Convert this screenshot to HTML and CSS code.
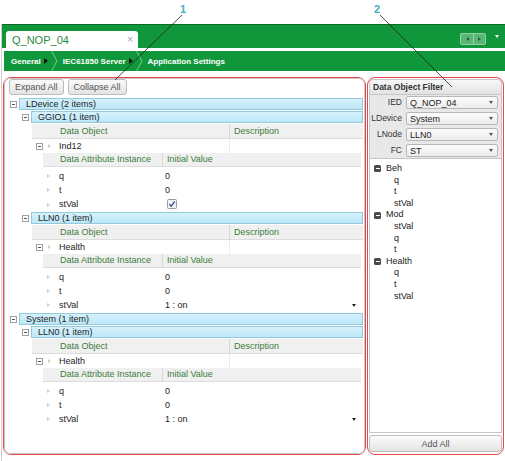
FILE: index.html
```html
<!DOCTYPE html>
<html lang="en">
<head>
    <meta charset="UTF-8">
    <title>Application Settings</title>
    <link rel="stylesheet" href="styles.css">
</head>
<body>
    <div class="app">
        <!-- Tab bar -->
        <div class="tabbar">
            <div class="tab">
                <span class="tab-title">Q_NOP_04</span>
                <span class="tab-close">×</span>
            </div>
            <div class="tab-nav">
                <span class="nav-btn"><i class="tri-left"></i></span>
                <span class="nav-btn"><i class="tri-right"></i></span>
            </div>
            <i class="tab-menu"></i>
        </div>

        <!-- Breadcrumbs -->
        <div class="crumbs">
            <span class="crumb">General</span><i class="crumb-arrow"></i>
            <svg class="crumb-sep" width="7" height="20" viewBox="0 0 7 20"><polyline points="0.5,0 6,10 0.5,20" /></svg>
            <span class="crumb">IEC61850 Server</span><i class="crumb-arrow"></i>
            <svg class="crumb-sep" width="7" height="20" viewBox="0 0 7 20"><polyline points="0.5,0 6,10 0.5,20" /></svg>
            <span class="crumb">Application Settings</span>
        </div>

        <div class="main">
            <!-- Left: data tree -->
            <div class="mark mark-left">
                <div class="panel tree-panel">
                    <div class="toolbar">
                        <button class="btn">Expand All</button>
                        <button class="btn">Collapse All</button>
                    </div>

                    <div class="tree">
                        <div class="node">
                            <div class="node-row"><span class="toggle"><i class="minus"></i></span><div class="bar">LDevice (2 items)</div></div>
                            <div class="children">
                                <div class="node">
                                    <div class="node-row"><span class="toggle"><i class="minus"></i></span><div class="bar">GGIO1 (1 item)</div></div>
                                    <div class="children leaf">
                                        <div class="do-head"><span></span><span>Data Object</span><span class="col-sep">Description</span></div>
                                        <div class="do-row"><span class="do-exp"><i class="minus"></i><i class="arrow"></i></span><span>Ind12</span><span class="col-sep"></span></div>
                                        <div class="dai">
                                            <div class="dai-head"><span></span><span>Data Attribute Instance</span><span class="col-sep">Initial Value</span></div>
                                            <div class="dai-rows">
                                                <div class="attr"><span><i class="arrow"></i></span><span>q</span><span>0</span></div>
                                                <div class="attr"><span><i class="arrow"></i></span><span>t</span><span>0</span></div>
                                                <div class="attr"><span><i class="arrow"></i></span><span>stVal</span><span><svg class="check" width="10" height="10" viewBox="0 0 10 10"><rect x="0.5" y="0.5" width="9" height="9" rx="1" /><polyline points="2.4,5.2 4.2,7.2 7.8,2.4" /></svg></span></div>
                                            </div>
                                        </div>
                                    </div>
                                </div>
                                <div class="node">
                                    <div class="node-row"><span class="toggle"><i class="minus"></i></span><div class="bar">LLN0 (1 item)</div></div>
                                    <div class="children leaf">
                                        <div class="do-head"><span></span><span>Data Object</span><span class="col-sep">Description</span></div>
                                        <div class="do-row"><span class="do-exp"><i class="minus"></i><i class="arrow"></i></span><span>Health</span><span class="col-sep"></span></div>
                                        <div class="dai">
                                            <div class="dai-head"><span></span><span>Data Attribute Instance</span><span class="col-sep">Initial Value</span></div>
                                            <div class="dai-rows">
                                                <div class="attr"><span><i class="arrow"></i></span><span>q</span><span>0</span></div>
                                                <div class="attr"><span><i class="arrow"></i></span><span>t</span><span>0</span></div>
                                                <div class="attr"><span><i class="arrow"></i></span><span>stVal</span><span class="combo">1 : on<i class="drop"></i></span></div>
                                            </div>
                                        </div>
                                    </div>
                                </div>
                            </div>
                        </div>

                        <div class="node">
                            <div class="node-row"><span class="toggle"><i class="minus"></i></span><div class="bar">System (1 item)</div></div>
                            <div class="children">
                                <div class="node">
                                    <div class="node-row"><span class="toggle"><i class="minus"></i></span><div class="bar">LLN0 (1 item)</div></div>
                                    <div class="children leaf">
                                        <div class="do-head"><span></span><span>Data Object</span><span class="col-sep">Description</span></div>
                                        <div class="do-row"><span class="do-exp"><i class="minus"></i><i class="arrow"></i></span><span>Health</span><span class="col-sep"></span></div>
                                        <div class="dai">
                                            <div class="dai-head"><span></span><span>Data Attribute Instance</span><span class="col-sep">Initial Value</span></div>
                                            <div class="dai-rows">
                                                <div class="attr"><span><i class="arrow"></i></span><span>q</span><span>0</span></div>
                                                <div class="attr"><span><i class="arrow"></i></span><span>t</span><span>0</span></div>
                                                <div class="attr"><span><i class="arrow"></i></span><span>stVal</span><span class="combo">1 : on<i class="drop"></i></span></div>
                                            </div>
                                        </div>
                                    </div>
                                </div>
                            </div>
                        </div>
                    </div>
                </div>
            </div>

            <!-- Right: filter -->
            <div class="mark mark-right">
                <div class="panel filter-panel">
                    <div class="filter-head">Data Object Filter</div>
                    <div class="filter-form">
                        <label>IED</label><div class="select">Q_NOP_04<i class="drop"></i></div>
                        <label>LDevice</label><div class="select">System<i class="drop"></i></div>
                        <label>LNode</label><div class="select">LLN0<i class="drop"></i></div>
                        <label>FC</label><div class="select">ST<i class="drop"></i></div>
                    </div>
                    <div class="filter-tree">
                        <div class="ft-parent"><i class="box-minus"></i>Beh</div>
                        <div class="ft-child">q</div>
                        <div class="ft-child">t</div>
                        <div class="ft-child">stVal</div>
                        <div class="ft-parent"><i class="box-minus"></i>Mod</div>
                        <div class="ft-child">stVal</div>
                        <div class="ft-child">q</div>
                        <div class="ft-child">t</div>
                        <div class="ft-parent"><i class="box-minus"></i>Health</div>
                        <div class="ft-child">q</div>
                        <div class="ft-child">t</div>
                        <div class="ft-child">stVal</div>
                    </div>
                    <button class="btn add-btn">Add All</button>
                </div>
            </div>
        </div>
    </div>

    <!-- Callout labels -->
    <svg class="callouts" width="505" height="461" viewBox="0 0 505 461">
        <text x="180" y="13">1</text>
        <line x1="182" y1="15" x2="115" y2="80" />
        <text x="374" y="13">2</text>
        <line x1="380" y1="15" x2="452" y2="87" />
    </svg>
</body>
</html>
```

FILE: styles.css
```css
* {
    margin: 0;
    padding: 0;
    box-sizing: border-box;
}

body {
    width: 505px;
    height: 461px;
    overflow: hidden;
    position: relative;
    background: #fff;
    font-family: "Liberation Sans", Arial, sans-serif;
    font-size: 9px;
    color: #222;
}

i {
    display: block;
    font-style: normal;
}

.app {
    margin: 24px 0 0 1px;
    height: 437px;
    border-left: 1px solid #d0d0d0;
}

/* Tab bar */
.tabbar {
    display: flex;
    align-items: flex-end;
    height: 24px;
    padding-left: 4px;
    background: #10973b;
    border-top: 1px solid #0a6b29;
}

.tab {
    display: flex;
    align-items: center;
    justify-content: space-between;
    width: 132px;
    height: 17px;
    padding: 0 5px 0 6px;
    background: #fff;
    border-radius: 3px 3px 0 0;
}

.tab-title {
    font-size: 11px;
    color: #2b8c3e;
}

.tab-close {
    font-size: 10px;
    color: #a0a0a0;
}

.tab-nav {
    display: flex;
    align-self: flex-start;
    margin: 8px 0 0 auto;
    height: 12px;
    border: 1px solid rgba(255, 255, 255, 0.35);
    border-radius: 2px;
    background: rgba(255, 255, 255, 0.3);
}

.nav-btn {
    display: flex;
    align-items: center;
    justify-content: center;
    width: 12px;
    height: 10px;
}

.nav-btn + .nav-btn {
    border-left: 1px solid rgba(255, 255, 255, 0.35);
}

.tri-left {
    border-right: 3px solid #2f5f3a;
    border-top: 2.5px solid transparent;
    border-bottom: 2.5px solid transparent;
}

.tri-right {
    border-left: 3px solid #2f5f3a;
    border-top: 2.5px solid transparent;
    border-bottom: 2.5px solid transparent;
}

.tab-menu {
    align-self: flex-start;
    margin: 10px 6px 0 9px;
    border-top: 3px solid #fff;
    border-left: 2.5px solid transparent;
    border-right: 2.5px solid transparent;
}

/* Breadcrumbs */
.crumbs {
    display: flex;
    align-items: center;
    height: 20px;
    margin: 3px 0 0 2px;
    padding-left: 7px;
    background: #10973b;
    color: #fff;
    font-size: 8px;
    font-weight: bold;
}

.crumb-arrow {
    margin-left: 3px;
    border-left: 4px solid #111;
    border-top: 3px solid transparent;
    border-bottom: 3px solid transparent;
}

.crumb-sep {
    margin: 0 5px 0 3px;
}

.crumb-sep polyline {
    fill: none;
    stroke: rgba(255, 255, 255, 0.45);
    stroke-width: 1;
}

/* Main area */
.main {
    display: flex;
    padding-top: 6px;
}

.mark {
    height: 378px;
    margin-left: 1px;
    border: 1.5px solid #e8474e;
    border-radius: 8px;
}

.mark-left {
    width: 363px;
}

.mark-right {
    width: 137px;
}

.panel {
    height: 100%;
}

/* Buttons */
.btn {
    height: 16px;
    padding: 0 5px;
    border: 1px solid #bdbdbd;
    border-radius: 3px;
    background: linear-gradient(#fbfbfb, #e3e3e3);
    color: #555;
    font-family: inherit;
    font-size: 9px;
}

/* Left tree panel */
.tree-panel {
    border: 1px solid #c8c8c8;
    border-radius: 6px;
}

.toolbar {
    display: flex;
    gap: 4px;
    padding: 0 0 0 4px;
}

.tree {
    margin-top: 3px;
    padding: 0 1px 0 2px;
}

.node-row {
    display: flex;
    height: 13px;
    padding-bottom: 1px;
}

.toggle {
    display: flex;
    align-items: center;
    justify-content: center;
    width: 12px;
}

.minus {
    position: relative;
    width: 7px;
    height: 7px;
    border: 1px solid #a0a0a0;
    background: #fff;
}

.minus::after {
    content: "";
    position: absolute;
    left: 1px;
    top: 2px;
    width: 3px;
    height: 1px;
    background: #555;
}

.bar {
    flex: 1;
    padding-left: 6px;
    line-height: 10px;
    border: 1px solid #94c8dc;
    background: linear-gradient(#d6f2fc, #bce7f8);
    color: #1d1d1d;
}

.children {
    padding-left: 12px;
}

.children.leaf {
    padding: 0 0 1px 13px;
}

.do-head,
.do-row {
    display: grid;
    grid-template-columns: 24px 173px 1fr;
}

.do-head {
    height: 15px;
    line-height: 14px;
    background: #f0f0f0;
    border-bottom: 1px solid #dcdcdc;
    color: #3c7d3c;
}

.do-head span,
.dai-head span {
    padding-left: 4px;
}

.col-sep {
    border-left: 1px solid #d6d6d6;
}

.do-row {
    height: 14px;
    line-height: 14px;
}

.do-row span {
    padding-left: 3px;
}

.do-row .col-sep {
    border-left-color: #ececec;
}

.do-exp {
    display: flex;
    align-items: center;
    gap: 5px;
}

.do-row .do-exp {
    padding-left: 4px;
}

.arrow {
    border-left: 3px solid #cfcfcf;
    border-top: 2.5px solid transparent;
    border-bottom: 2.5px solid transparent;
}

.dai {
    margin: 0 2px 0 11px;
}

.dai-head,
.attr {
    display: grid;
    grid-template-columns: 13px 106px 1fr;
}

.dai-head {
    height: 14px;
    line-height: 13px;
    background: #f0f0f0;
    border-bottom: 1px solid #dcdcdc;
    color: #3c7d3c;
}

.dai-rows {
    padding-top: 2px;
}

.attr {
    height: 14px;
    line-height: 14px;
}

.attr span {
    padding-left: 3px;
}

.attr span:first-child {
    display: flex;
    align-items: center;
    padding-left: 4px;
}

.check {
    margin: 2px 0 0 2px;
}

.check rect {
    fill: #f1f3f6;
    stroke: #9a9a9a;
}

.check polyline {
    fill: none;
    stroke: #3a4d8f;
    stroke-width: 1.3;
}

.combo {
    display: flex;
    align-items: center;
    justify-content: space-between;
    padding-right: 5px;
}

.drop {
    border-top: 3px solid #222;
    border-left: 2.5px solid transparent;
    border-right: 2.5px solid transparent;
}

/* Right filter panel */
.filter-panel {
    display: flex;
    flex-direction: column;
    padding: 1px 1px 2px;
}

.filter-head {
    height: 16px;
    padding-left: 3px;
    line-height: 14px;
    border: 1px solid #c6c6c6;
    border-radius: 4px 4px 0 0;
    background: linear-gradient(#f8f8f8, #e2e2e2);
    color: #333;
    font-size: 8.5px;
    font-weight: bold;
}

.filter-form {
    display: grid;
    grid-template-columns: 32px 1fr;
    grid-auto-rows: 13px;
    column-gap: 4px;
    row-gap: 3px;
    padding: 1px 3px 1px 0;
    background: #e8e8e8;
    border: 1px solid #c6c6c6;
    border-top: 0;
}

.filter-form label {
    text-align: right;
    line-height: 13px;
    font-size: 8.5px;
    color: #333;
}

.select {
    display: flex;
    align-items: center;
    justify-content: space-between;
    padding: 0 4px 0 3px;
    border: 1px solid #b8b8b8;
    border-radius: 2px;
    background: linear-gradient(#fdfdfd, #ebebeb);
    color: #222;
}

.select .drop {
    border-top-color: #555;
}

.filter-tree {
    flex: 1;
    padding: 4px 0 0 4px;
    line-height: 11.6px;
    border: 1px solid #c6c6c6;
    border-top: 0;
    background: #fff;
}

.ft-parent {
    display: flex;
    align-items: center;
}

.box-minus {
    position: relative;
    width: 7px;
    height: 7px;
    margin-right: 5px;
    border-radius: 1.5px;
    background: #4a4a4a;
}

.box-minus::after {
    content: "";
    position: absolute;
    left: 1.5px;
    top: 3px;
    width: 4px;
    height: 1px;
    background: #fff;
}

.ft-child {
    padding-left: 20px;
}

.add-btn {
    height: 17px;
    margin-top: 2px;
}

/* Callouts */
.callouts {
    position: absolute;
    top: 0;
    left: 0;
    pointer-events: none;
}

.callouts text {
    font-family: "Liberation Sans", Arial, sans-serif;
    font-size: 11px;
    font-weight: bold;
    fill: #45aec2;
}

.callouts line {
    stroke: #222;
    stroke-width: 0.8;
}
```
